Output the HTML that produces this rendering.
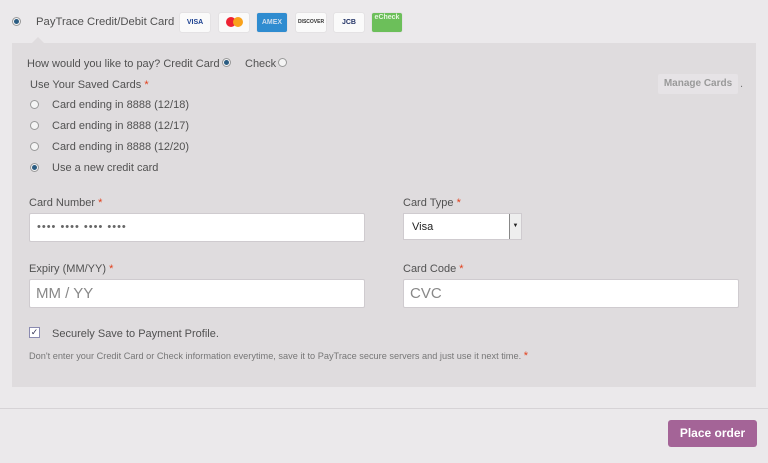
<!DOCTYPE html><html><head><style>
body{margin:0;width:768px;height:463px;background:#ebe9eb;font-family:"Liberation Sans",sans-serif;color:#515151;position:relative;overflow:hidden;font-size:11px}
.a{position:absolute;white-space:nowrap}
.r{position:absolute;width:7px;height:7px;border:1px solid #999;border-radius:50%;background:#f4f4f4}
.r.on::after{content:"";position:absolute;left:1px;top:1px;width:5px;height:5px;border-radius:50%;background:#2a5c82}
.in{position:absolute;background:#fff;border:1px solid #cfcbcf;border-radius:2px;box-sizing:border-box}
.s{color:#e2401c}
.cc{position:absolute;top:13px;width:30px;height:19px;border-radius:2px;background:#fafafa;box-shadow:0 0 1px #bbb;font-size:7px;font-weight:bold;text-align:center;line-height:19px}
</style></head><body>
<div class="r on" style="left:12px;top:17px"></div>
<div class="a" style="left:36px;top:16px;font-size:11.3px">PayTrace Credit/Debit Card</div>
<div class="cc" style="left:180px;color:#1a3f8f">VISA</div>
<div class="cc" style="left:219px"><span style="display:inline-block;width:10px;height:10px;border-radius:50%;background:#e23;vertical-align:middle"></span><span style="display:inline-block;width:10px;height:10px;border-radius:50%;background:#f9a21b;margin-left:-3px;vertical-align:middle"></span></div>
<div class="cc" style="left:257px;background:#2f8cd0;color:#cde">AMEX</div>
<div class="cc" style="left:296px;color:#333;font-size:5px">DISCOVER</div>
<div class="cc" style="left:334px;color:#236">JCB</div>
<div class="cc" style="left:372px;background:#6cbf5a;color:#e6f6e0;line-height:10px">eCheck</div>
<div style="position:absolute;left:12px;top:43px;width:744px;height:344px;background:#dfdcde"></div>
<div style="position:absolute;left:32px;top:37px;width:0;height:0;border:6px solid transparent;border-bottom-color:#dfdcde;border-top:0"></div>
<div class="a" style="left:27px;top:58px">How would you like to pay? Credit Card</div>
<div class="r on" style="left:222px;top:58px"></div>
<div class="a" style="left:245px;top:58px">Check</div>
<div class="r" style="left:278px;top:58px"></div>
<div class="a" style="left:30px;top:79px">Use Your Saved Cards <span class="s">*</span></div>
<div class="a" style="left:658px;top:74px;width:80px;height:20px;background:#e6e3e6;border-radius:2px;color:#999;font-size:10px;font-weight:bold;text-align:center;line-height:20px">Manage Cards</div>
<div class="a" style="left:740px;top:78px;color:#777">.</div>
<div class="r" style="left:30px;top:100px"></div><div class="a" style="left:52px;top:99px">Card ending in 8888 (12/18)</div>
<div class="r" style="left:30px;top:121px"></div><div class="a" style="left:52px;top:120px">Card ending in 8888 (12/17)</div>
<div class="r" style="left:30px;top:142px"></div><div class="a" style="left:52px;top:141px">Card ending in 8888 (12/20)</div>
<div class="r on" style="left:30px;top:163px"></div><div class="a" style="left:52px;top:162px">Use a new credit card</div>
<div class="a" style="left:29px;top:197px">Card Number <span class="s">*</span></div>
<div class="in" style="left:29px;top:213px;width:336px;height:29px"><span class="a" style="left:7px;top:7px;color:#666;letter-spacing:1px">•••• •••• •••• ••••</span></div>
<div class="a" style="left:403px;top:197px">Card Type <span class="s">*</span></div>
<div class="in" style="left:403px;top:213px;width:119px;height:27px;border-radius:0"><span class="a" style="left:8px;top:7px;color:#222">Visa</span><div style="position:absolute;right:0;top:0;width:11px;height:25px;background:#eee;border-left:1px solid #888;font-size:6px;text-align:center;line-height:25px;color:#222">▼</div></div>
<div class="a" style="left:29px;top:263px">Expiry (MM/YY) <span class="s">*</span></div>
<div class="in" style="left:29px;top:279px;width:336px;height:29px"><span class="a" style="left:6px;top:5px;color:#888;font-size:15px">MM / YY</span></div>
<div class="a" style="left:403px;top:263px">Card Code <span class="s">*</span></div>
<div class="in" style="left:403px;top:279px;width:336px;height:29px"><span class="a" style="left:6px;top:5px;color:#888;font-size:15px">CVC</span></div>
<div style="position:absolute;left:29px;top:327px;width:9px;height:9px;border:1px solid #8a8ab0;background:#fff;font-size:9px;line-height:9px;color:#335;text-align:center">✓</div>
<div class="a" style="left:52px;top:328px">Securely Save to Payment Profile.</div>
<div class="a" style="left:29px;top:350px;font-size:9.2px;color:#777">Don't enter your Credit Card or Check information everytime, save it to PayTrace secure servers and just use it next time. <span class="s" style="font-size:11px">*</span></div>
<div style="position:absolute;left:0;top:408px;width:768px;height:1px;background:#d6d3d6"></div>
<div class="a" style="left:668px;top:420px;width:89px;height:27px;background:#a46497;border-radius:3px;color:#fff;font-weight:bold;font-size:12px;text-align:center;line-height:27px">Place order</div>
</body></html>
